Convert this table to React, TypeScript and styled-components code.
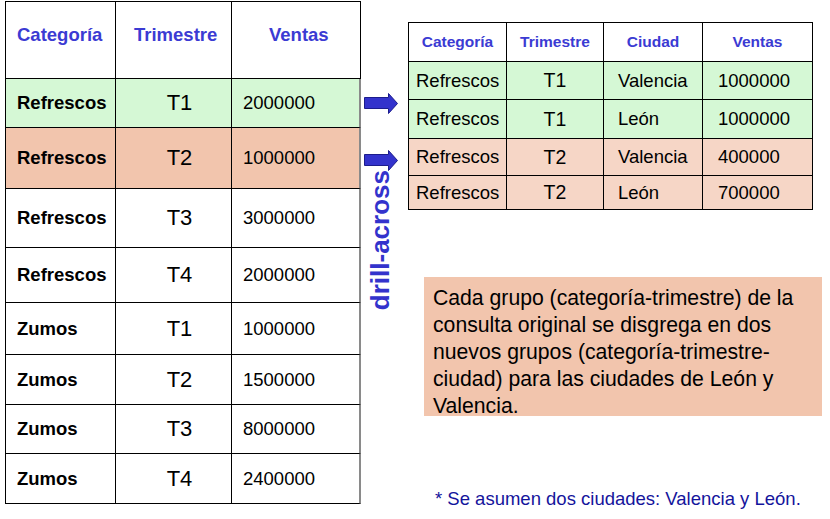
import React from 'react';
import styled, { createGlobalStyle } from 'styled-components';

const GlobalStyle = createGlobalStyle`
  html, body {
    margin: 0;
    padding: 0;
    background: #ffffff;
    font-family: 'Liberation Sans', Arial, sans-serif;
  }
`;

const GREEN = '#d5f8d5';
const PEACH = '#f2c5ad';
const PEACH_LIGHT = '#f6d6c6';
const BLUE = '#3b3bd3';

const Page = styled.div`
  display: flex;
  width: 830px;
  height: 519px;
  overflow: hidden;
`;

const Grid = styled.div<{ $cols: string; $rows: string }>`
  display: grid;
  grid-template-columns: ${(p) => p.$cols};
  grid-template-rows: ${(p) => p.$rows};
  border-top: 1px solid #000;
  border-left: 1px solid #000;
  align-self: flex-start;
`;

const LeftTable = styled(Grid)`
  margin: 1px 0 0 5px;
`;

const Cell = styled.div<{
  $bg?: string;
  $center?: boolean;
  $pad?: number;
  $edge?: boolean;
}>`
  display: flex;
  align-items: center;
  justify-content: ${(p) => (p.$center ? 'center' : 'flex-start')};
  padding-left: ${(p) => p.$pad ?? 0}px;
  background: ${(p) => p.$bg ?? 'transparent'};
  border-right: ${(p) => (p.$edge ? '2px solid #8a8a8a' : '1px solid #000')};
  border-bottom: 1px solid #000;
  box-sizing: border-box;
  color: #000;
  white-space: nowrap;
`;

const LeftHead = styled(Cell)`
  padding-bottom: 10px;
  font-size: 18.5px;
  font-weight: bold;
  color: ${BLUE};
`;

const Category = styled(Cell)`
  font-size: 18.5px;
  font-weight: bold;
`;

const Quarter = styled(Cell)`
  font-size: 22px;
`;

const Amount = styled(Cell)`
  font-size: 18.5px;
`;

const Middle = styled.div`
  width: 47px;
  display: flex;
  flex-direction: column;
  align-items: flex-start;
  padding: 93px 0 0 3px;
  box-sizing: border-box;
`;

const ArrowBox = styled.div<{ $gap: number }>`
  margin-bottom: ${(p) => p.$gap}px;
  height: 21px;
`;

const VerticalLabel = styled.div`
  writing-mode: vertical-rl;
  transform: rotate(180deg);
  font-size: 26px;
  line-height: 26px;
  font-weight: bold;
  color: #3333cc;
  margin: -1px 0 0 3px;
`;

const RightColumn = styled.div`
  display: flex;
  flex-direction: column;
  padding-top: 22px;
`;

const RightHead = styled(Cell)`
  font-size: 15.5px;
  font-weight: bold;
  color: ${BLUE};
`;

const RightText = styled(Cell)`
  font-size: 18.5px;
`;

const RightQuarter = styled(Cell)`
  font-size: 19.5px;
`;

const Note = styled.div`
  margin: 67px 0 0 16px;
  width: 398px;
  height: 139px;
  box-sizing: border-box;
  padding: 7px 0 0 9px;
  background: ${PEACH};
  font-size: 21.2px;
  line-height: 27px;
  color: #000;
  white-space: nowrap;
`;

const Footnote = styled.div`
  margin: 72px 0 0 27px;
  font-size: 18.5px;
  line-height: 22px;
  color: #14149c;
  white-space: nowrap;
`;

const Arrow = () => (
  <svg width="34" height="21" viewBox="0 0 34 21">
    <path
      d="M0.5 4.5 H24.5 V0.5 L33.5 10.5 L24.5 20.5 V15.5 H0.5 Z"
      fill="#3333cc"
      stroke="#1c1c8c"
      strokeWidth="1"
    />
  </svg>
);

const leftRows = [
  { cat: 'Refrescos', q: 'T1', v: '2000000', bg: GREEN },
  { cat: 'Refrescos', q: 'T2', v: '1000000', bg: PEACH },
  { cat: 'Refrescos', q: 'T3', v: '3000000' },
  { cat: 'Refrescos', q: 'T4', v: '2000000' },
  { cat: 'Zumos', q: 'T1', v: '1000000' },
  { cat: 'Zumos', q: 'T2', v: '1500000' },
  { cat: 'Zumos', q: 'T3', v: '8000000' },
  { cat: 'Zumos', q: 'T4', v: '2400000' },
];

const rightRows = [
  { q: 'T1', city: 'Valencia', v: '1000000', bg: GREEN },
  { q: 'T1', city: 'León', v: '1000000', bg: GREEN },
  { q: 'T2', city: 'Valencia', v: '400000', bg: PEACH_LIGHT },
  { q: 'T2', city: 'León', v: '700000', bg: PEACH_LIGHT },
];

const App = (): JSX.Element => {
  return (
    <Page>
      <GlobalStyle />
      <LeftTable
        $cols='110px 116px 129px'
        $rows='77px 49px 61px 59px 55px 52px 50px 49px 50px'
      >
        <LeftHead $pad={11}>Categoría</LeftHead>
        <LeftHead $pad={18}>Trimestre</LeftHead>
        <LeftHead $pad={37}>Ventas</LeftHead>
        {leftRows.map((row, i) => (
          <React.Fragment key={i}>
            <Category $bg={row.bg} $pad={11}>
              {row.cat}
            </Category>
            <Quarter $bg={row.bg} $center $pad={12}>
              {row.q}
            </Quarter>
            <Amount $bg={row.bg} $pad={11} $edge={true}>
              {row.v}
            </Amount>
          </React.Fragment>
        ))}
      </LeftTable>

      <Middle>
        <ArrowBox $gap={36}>
          <Arrow />
        </ArrowBox>
        <ArrowBox $gap={0}>
          <Arrow />
        </ArrowBox>
        <VerticalLabel>drill-across</VerticalLabel>
      </Middle>

      <RightColumn>
        <Grid $cols='98px 97px 99px 110px' $rows='39px 38px 39px 37px 34px'>
          <RightHead $center>Categoría</RightHead>
          <RightHead $center>Trimestre</RightHead>
          <RightHead $center>Ciudad</RightHead>
          <RightHead $center>Ventas</RightHead>
          {rightRows.map((row, i) => (
            <React.Fragment key={i}>
              <RightText $bg={row.bg} $pad={7}>
                Refrescos
              </RightText>
              <RightQuarter $bg={row.bg} $center>
                {row.q}
              </RightQuarter>
              <RightText $bg={row.bg} $pad={14}>
                {row.city}
              </RightText>
              <RightText $bg={row.bg} $pad={15}>
                {row.v}
              </RightText>
            </React.Fragment>
          ))}
        </Grid>

        <Note>
          Cada grupo (categoría-trimestre) de la
          <br />
          consulta original se disgrega en dos
          <br />
          nuevos grupos (categoría-trimestre-
          <br />
          ciudad) para las ciudades de León y
          <br />
          Valencia.
        </Note>

        <Footnote>* Se asumen dos ciudades: Valencia y León.</Footnote>
      </RightColumn>
    </Page>
  );
};

export default App;
